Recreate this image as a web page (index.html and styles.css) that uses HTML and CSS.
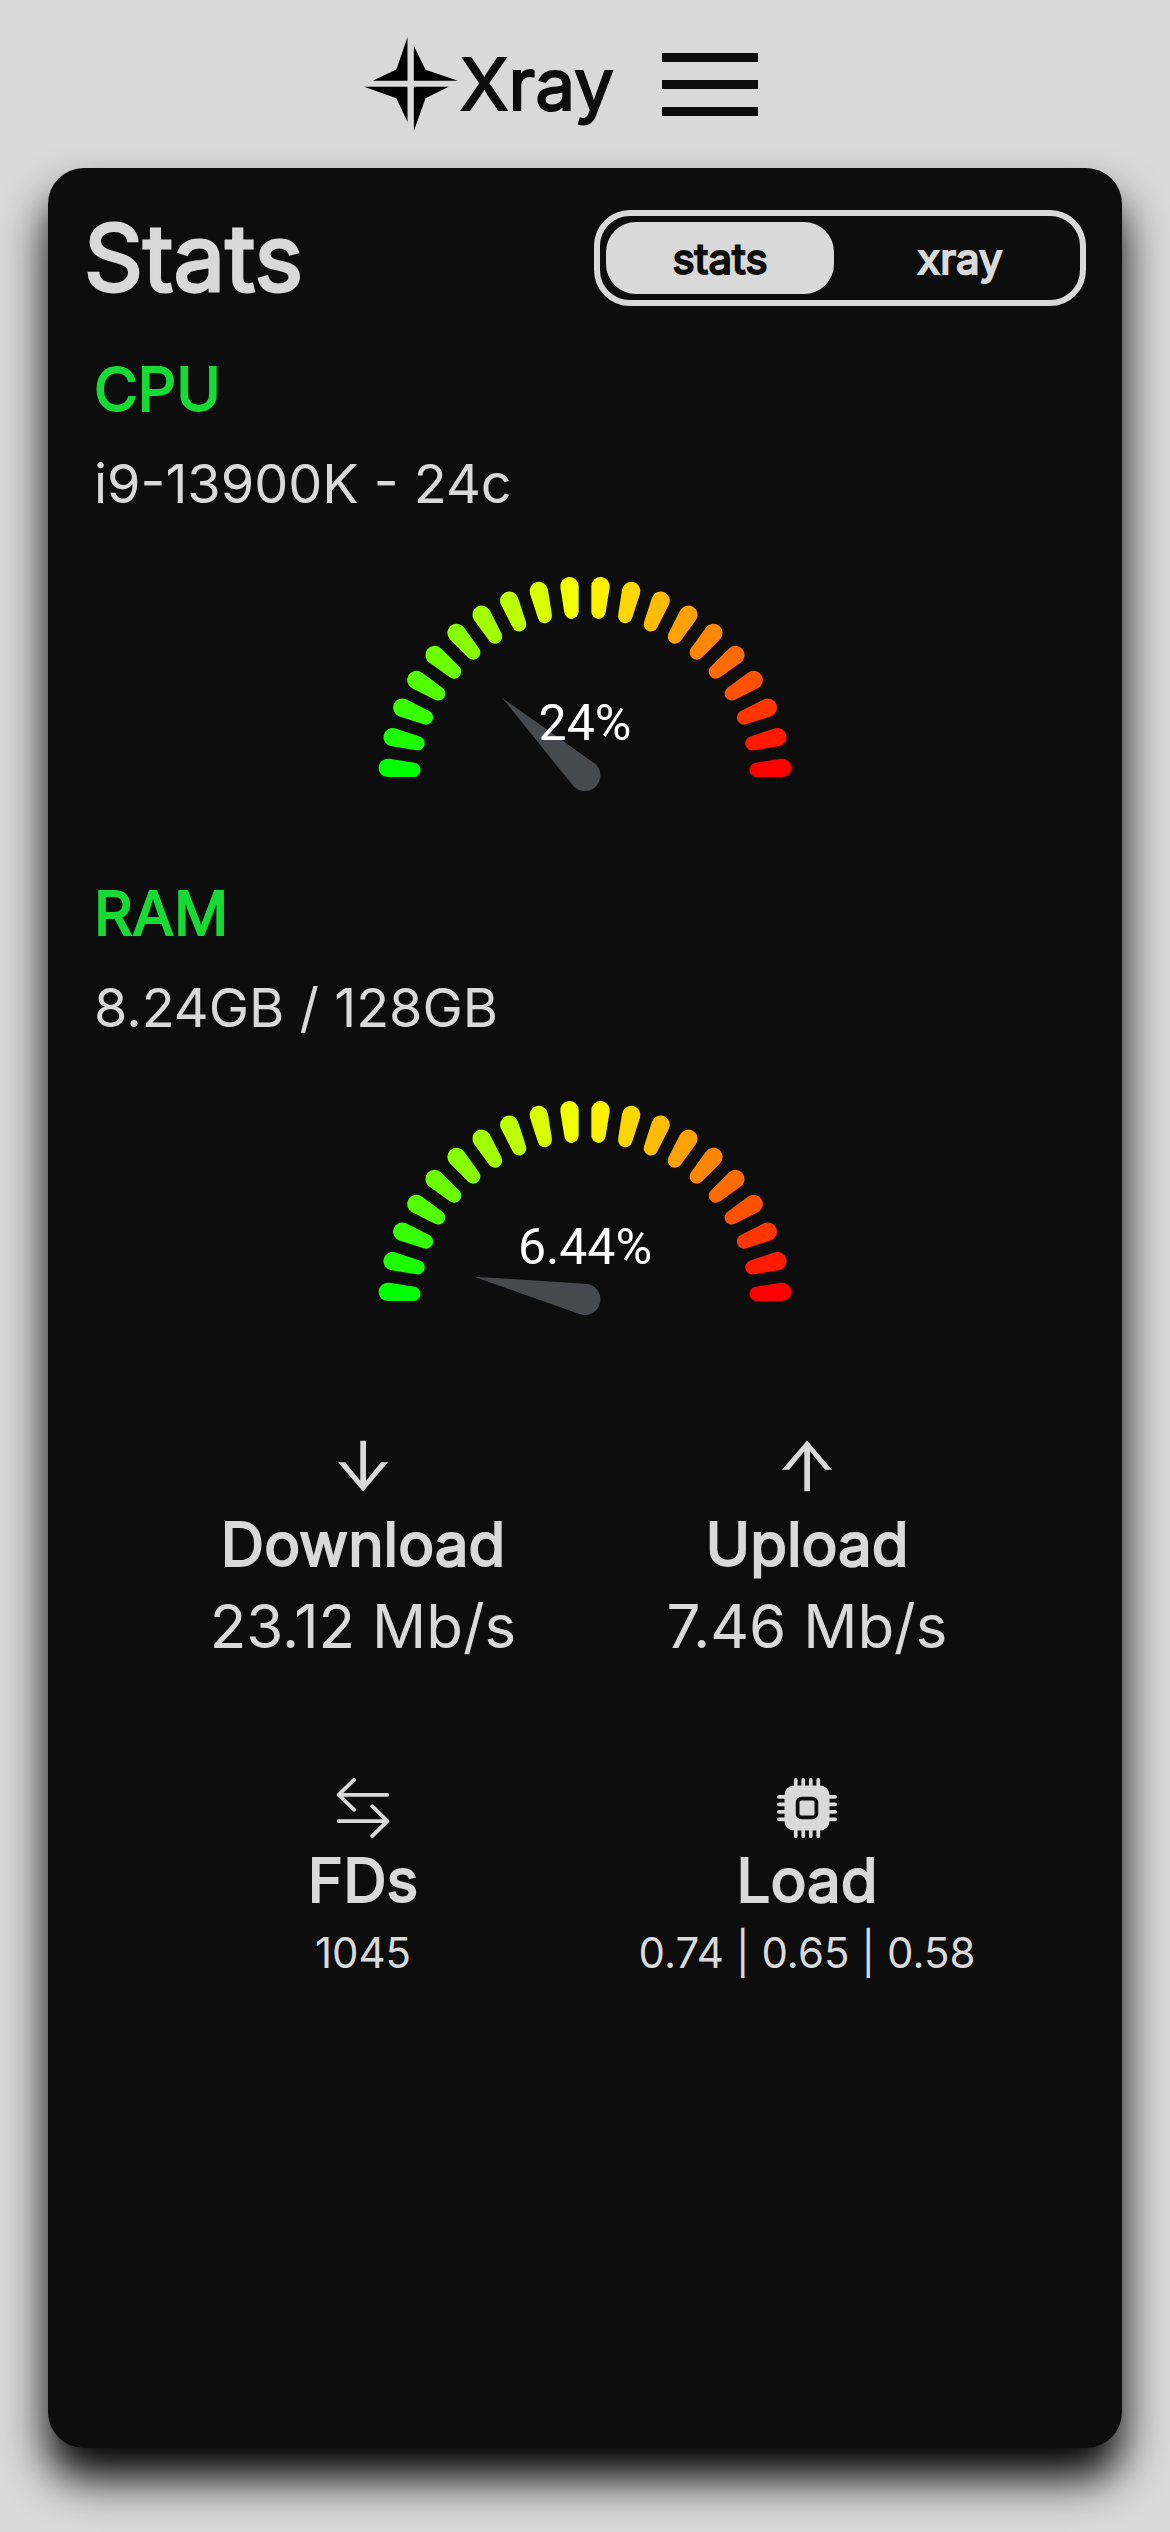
FILE: index.html
```html
<!DOCTYPE html>
<html lang="en">
<head>
<meta charset="utf-8">
<meta name="viewport" content="width=device-width, initial-scale=1">
<title>Xray</title>
<link rel="stylesheet" href="styles.css">
</head>
<body>
<header class="topbar">
  <a class="brand" href="#">
    <svg class="brand-mark" viewBox="0 0 281 281" aria-hidden="true">
      <path d="M130 0V131H26L97 97ZM149 26L184 98 281 131H149ZM0 149H130V254L97 183ZM149 149H253L184 183 149 281Z"/>
    </svg>
    <span class="brand-name">Xray</span>
  </a>
  <button class="menu" type="button" aria-label="Menu">
    <span class="menu-bar"></span>
    <span class="menu-bar"></span>
    <span class="menu-bar"></span>
  </button>
</header>

<main class="card">
  <div class="card-head">
    <h1 class="title">Stats</h1>
    <div class="toggle">
      <button class="toggle-item is-active" type="button">stats</button>
      <button class="toggle-item" type="button">xray</button>
    </div>
  </div>

  <section class="resource">
    <h2 class="resource-name">CPU</h2>
    <p class="resource-info">i9-13900K - 24c</p>
    <svg class="gauge" viewBox="0 0 420 228" role="img" aria-label="CPU usage">
      <defs>
        <path id="tick" d="M-7.14-171.64L-9.17-197.08A9.2 9.2 0 1 1 9.17-197.08L7.14-171.64A7.16 7.16 0 0 1-7.14-171.64Z"/>
        <path id="needle" d="M-113 0L0-15.7A15.7 15.7 0 0 1 0 15.7Z"/>
        <g id="dial">
          <use href="#tick" fill="#00ff00" transform="rotate(-85.5)"/>
          <use href="#tick" fill="#1bff00" transform="rotate(-76.5)"/>
          <use href="#tick" fill="#36ff00" transform="rotate(-67.5)"/>
          <use href="#tick" fill="#51ff00" transform="rotate(-58.5)"/>
          <use href="#tick" fill="#6bff00" transform="rotate(-49.5)"/>
          <use href="#tick" fill="#86ff00" transform="rotate(-40.5)"/>
          <use href="#tick" fill="#a1ff00" transform="rotate(-31.5)"/>
          <use href="#tick" fill="#bcff00" transform="rotate(-22.5)"/>
          <use href="#tick" fill="#d7ff00" transform="rotate(-13.5)"/>
          <use href="#tick" fill="#f2ff00" transform="rotate(-4.5)"/>
          <use href="#tick" fill="#fff200" transform="rotate(4.5)"/>
          <use href="#tick" fill="#ffd700" transform="rotate(13.5)"/>
          <use href="#tick" fill="#ffbc00" transform="rotate(22.5)"/>
          <use href="#tick" fill="#ffa100" transform="rotate(31.5)"/>
          <use href="#tick" fill="#ff8600" transform="rotate(40.5)"/>
          <use href="#tick" fill="#ff6b00" transform="rotate(49.5)"/>
          <use href="#tick" fill="#ff5100" transform="rotate(58.5)"/>
          <use href="#tick" fill="#ff3600" transform="rotate(67.5)"/>
          <use href="#tick" fill="#ff1b00" transform="rotate(76.5)"/>
          <use href="#tick" fill="#ff0000" transform="rotate(85.5)"/>
        </g>
      </defs>
      <use href="#dial" transform="translate(210 212.4)"/>
      <use href="#needle" fill="#464a4f" transform="translate(209.7 204.4) rotate(43.2)"/>
      <text class="gauge-value" x="210" y="169">24%</text>
    </svg>
  </section>

  <section class="resource">
    <h2 class="resource-name">RAM</h2>
    <p class="resource-info">8.24GB / 128GB</p>
    <svg class="gauge" viewBox="0 0 420 228" role="img" aria-label="RAM usage">
      <use href="#dial" transform="translate(210 212.4)"/>
      <use href="#needle" fill="#464a4f" transform="translate(209.7 204.4) rotate(11.6)"/>
      <text class="gauge-value" x="210" y="169">6.44%</text>
    </svg>
  </section>

  <section class="metrics">
    <div class="metric metric-net">
      <svg class="icon" viewBox="0 0 60 60" aria-hidden="true"><path d="M27.3 4.7H33V44.7L48 26.3H55L30.1 55.6 5 26.3H12.2L27.3 44.7Z"/></svg>
      <h3 class="metric-name">Download</h3>
      <p class="metric-value">23.12 Mb/s</p>
    </div>
    <div class="metric metric-net">
      <svg class="icon" viewBox="0 0 60 60" aria-hidden="true"><path d="M27.3 55.3H33V15.3L48 33.7H55L30.1 4.4 5 33.7H12.2L27.3 15.3Z"/></svg>
      <h3 class="metric-name">Upload</h3>
      <p class="metric-value">7.46 Mb/s</p>
    </div>
    <div class="metric">
      <svg class="icon icon-line" viewBox="0 0 60 60" aria-hidden="true"><path d="M54.4 16.8H5.6M21 1.9L5.6 16.8 21 31.7M5.6 43.1H54.4M39.2 28.2L54.4 43.1 39.2 58.1"/></svg>
      <h3 class="metric-name">FDs</h3>
      <p class="metric-value metric-small">1045</p>
    </div>
    <div class="metric">
      <svg class="icon" viewBox="0 0 16 16" aria-hidden="true"><path d="M6.5 6a.5.5 0 0 0-.5.5v3a.5.5 0 0 0 .5.5h3a.5.5 0 0 0 .5-.5v-3a.5.5 0 0 0-.5-.5z"/><path d="M5.5.5a.5.5 0 0 0-1 0V2A2.5 2.5 0 0 0 2 4.5H.5a.5.5 0 0 0 0 1H2v1H.5a.5.5 0 0 0 0 1H2v1H.5a.5.5 0 0 0 0 1H2v1H.5a.5.5 0 0 0 0 1H2A2.5 2.5 0 0 0 4.5 14v1.5a.5.5 0 0 0 1 0V14h1v1.5a.5.5 0 0 0 1 0V14h1v1.5a.5.5 0 0 0 1 0V14h1v1.5a.5.5 0 0 0 1 0V14a2.5 2.5 0 0 0 2.5-2.5h1.5a.5.5 0 0 0 0-1H14v-1h1.5a.5.5 0 0 0 0-1H14v-1h1.5a.5.5 0 0 0 0-1H14v-1h1.5a.5.5 0 0 0 0-1H14A2.5 2.5 0 0 0 11.5 2V.5a.5.5 0 0 0-1 0V2h-1V.5a.5.5 0 0 0-1 0V2h-1V.5a.5.5 0 0 0-1 0V2h-1zm1 4.5h3A1.5 1.5 0 0 1 11 6.5v3A1.5 1.5 0 0 1 9.5 11h-3A1.5 1.5 0 0 1 5 9.5v-3A1.5 1.5 0 0 1 6.5 5"/></svg>
      <h3 class="metric-name">Load</h3>
      <p class="metric-value metric-small">0.74 | 0.65 | 0.58</p>
    </div>
  </section>
</main>
</body>
</html>
```

FILE: styles.css
```css
:root {
  --ink: #0d0d0d;
  --paper: #d9d9d9;
  --green: #17db34;
}

* {
  box-sizing: border-box;
  margin: 0;
  padding: 0;
}

body {
  display: flex;
  flex-direction: column;
  min-height: 100vh;
  padding: 0 48px 84px;
  background: var(--paper);
  color: var(--ink);
  font-family: Inter, "Liberation Sans", sans-serif;
  font-weight: 400;
}

h1, h2, h3, button {
  font-family: inherit;
  font-weight: 400;
}

.topbar {
  display: flex;
  justify-content: center;
  align-items: center;
  height: 168px;
  padding-right: 48px;
}

.brand {
  display: flex;
  align-items: center;
  gap: 2px;
  color: inherit;
  text-decoration: none;
}

.brand-mark {
  width: 94px;
  height: 94px;
  fill: #000;
}

.brand-name {
  font-size: 71px;
  line-height: 88px;
  -webkit-text-stroke: 2px currentColor;
}

.menu {
  display: flex;
  flex-direction: column;
  gap: 18px;
  width: 96px;
  margin-left: 48px;
  border: 0;
  background: none;
}

.menu-bar {
  width: 100%;
  height: 9px;
  background: var(--ink);
}

.card {
  flex: 1;
  padding: 42px 36px;
  border-radius: 36px;
  background: var(--ink);
  color: var(--paper);
  box-shadow: 0 30px 45px #000;
}

.card-head {
  display: flex;
  justify-content: space-between;
  align-items: center;
}

.title {
  font-size: 92px;
  line-height: 96px;
  -webkit-text-stroke: 3px currentColor;
}

.toggle {
  display: grid;
  grid-template-columns: 1fr 1fr;
  gap: 12px;
  width: 492px;
  height: 96px;
  padding: 6px;
  border: 6px solid var(--paper);
  border-radius: 36px;
}

.toggle-item {
  border: 0;
  border-radius: 30px;
  background: none;
  color: var(--paper);
  font-size: 42px;
  -webkit-text-stroke: 2px currentColor;
}

.toggle-item.is-active {
  background: var(--paper);
  color: var(--ink);
}

.resource {
  display: flex;
  flex-direction: column;
  margin-top: 78px;
  padding: 0 10px;
}

.card-head + .resource {
  margin-top: 47px;
}

.resource-name {
  color: var(--green);
  font-size: 60px;
  line-height: 72px;
  -webkit-text-stroke: 2px currentColor;
}

.resource-info {
  margin-top: 26px;
  font-size: 54px;
  line-height: 66px;
}

.gauge {
  align-self: center;
  width: 420px;
  height: 228px;
  margin-top: 54px;
}

.gauge-value {
  fill: #fff;
  font-family: Roboto, sans-serif;
  font-size: 50px;
  text-anchor: middle;
}

.metrics {
  display: grid;
  grid-template-columns: 444px 444px;
  justify-content: center;
  row-gap: 116px;
  margin-top: 113px;
}

.metric {
  display: flex;
  flex-direction: column;
  align-items: center;
}

.icon {
  width: 60px;
  height: 60px;
  margin-bottom: 6px;
  fill: currentColor;
}

.metric-net .icon {
  margin-bottom: 12px;
}

.icon-line {
  fill: none;
  stroke: currentColor;
  stroke-width: 3.75;
  stroke-linecap: round;
  stroke-linejoin: round;
}

.metric-name {
  font-size: 60px;
  line-height: 72px;
  -webkit-text-stroke: 2px currentColor;
}

.metric-value {
  margin-top: 10px;
  font-size: 60px;
  line-height: 72px;
}

.metric-small {
  font-size: 42px;
  line-height: 54px;
}
```
